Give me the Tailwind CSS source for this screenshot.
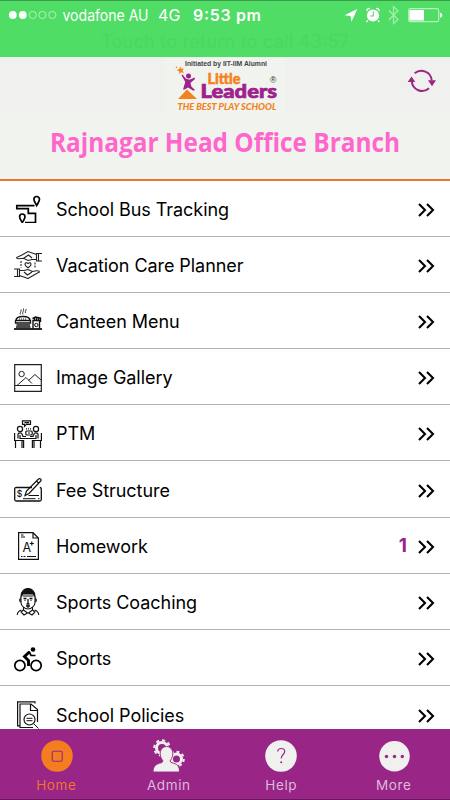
<!DOCTYPE html>
<html lang="en">
<head>
  <meta charset="UTF-8">
  <meta name="viewport" content="width=device-width, initial-scale=1.0">
  <title>Little Leaders</title>
  <script src="https://cdn.jsdelivr.net/npm/@tailwindcss/browser@4"></script>
</head>
<body class="bg-white font-['Inter',sans-serif] text-black">
  <!-- Shared row arrow -->
  <svg class="hidden">
    <symbol id="arrow" viewBox="0 0 17 14"><path d="M1 1l6 6-6 6M9 1l6 6-6 6" fill="none" stroke="#000" stroke-width="2.1"/></symbol>
  </svg>

  <div class="w-[450px] h-[800px] flex flex-col overflow-hidden">

    <!-- Status bar -->
    <div class="h-[57px] shrink-0 bg-[#4fdd66] border-t border-[#3c9a4b]">
      <svg class="block" width="450" height="56" viewBox="0 1 450 56" fill="#fff">
        <circle cx="12.8" cy="15" r="3.9"/>
        <circle cx="22.8" cy="15" r="3.9"/>
        <g fill="none" stroke="#c5f5cb" stroke-width=".8">
          <circle cx="32.7" cy="15" r="3.6"/>
          <circle cx="42.4" cy="15" r="3.6"/>
          <circle cx="52.3" cy="15" r="3.6"/>
        </g>
        <text x="62.5" y="21" font-size="16" textLength="86" lengthAdjust="spacingAndGlyphs">vodafone AU</text>
        <text x="158" y="21" font-size="16" textLength="22.5">4G</text>
        <text x="193" y="21" font-size="16" font-weight="600" textLength="68">9:53 pm</text>
        <text x="101" y="48" font-size="18" fill="#4ad762" textLength="248">Touch to return to call 43:57</text>
        <path d="M357.3 9 344.5 15.2 350.5 16 351.5 21.8Z"/>
        <circle cx="373" cy="15.5" r="6.1"/>
        <path d="M368 20.5l-1.5 1.5M378 20.5l1.5 1.5M367 11.2c-.5-2 1-3 3-2.6M379 11.2c.5-2-1-3-3-2.6" fill="none" stroke="#fff" stroke-width="1.3"/>
        <path d="M373.3 11.5V16h-3.2" fill="none" stroke="#4fdd66" stroke-width="1.1"/>
        <path d="M389 10.5l9 9-4.5 4V6.8l4.5 4-9 9" fill="none" stroke="#a2efab" stroke-width="1.3"/>
        <rect x="408.7" y="8.7" width="30" height="13" rx="1.8" fill="none" stroke="#b9f4bf" stroke-width="1.2"/>
        <rect x="409.5" y="10" width="14.5" height="10.5"/>
        <path d="M440 12.8c3 .5 3 4.400 0 4.900Z"/>
      </svg>
    </div>

    <!-- Header -->
    <header class="h-[123.5px] shrink-0 bg-[#f0f3ee] border-b-2 border-[#ed7231]">
      <svg class="block" width="450" height="121" viewBox="0 57 450 121">
        <rect x="0" y="57" width="450" height="56" fill="#f0f0ee"/>
        <rect x="164" y="58" width="121" height="55" fill="#f0f3ee"/>
        <text x="185" y="65.800" font-family="Liberation Sans" font-weight="700" font-size="7.500" fill="#444" textLength="82" lengthAdjust="spacingAndGlyphs">Initiated by IIT-IIM Alumni</text>
        <path d="M180 66.500l1.400 2.300 2.600-.4-1.500 2.100 1.500 2.400-2.700-.7-2 1.900-.1-2.900-2.600-1.200 2.700-1Z" fill="#f58220"/>
        <circle cx="176.500" cy="67.300" r=".8" fill="#f58220"/>
        <circle cx="188.500" cy="76" r="2.500" fill="#a0208c"/>
        <path d="M182.500 74.500l3.500 4.300 3.500 1 5.200-2.300.3 1.600-4.600 3.900 1 3.400 3.600 3.600-1.600.8-5.400-3.300-3.300 2-1.700 0 2.300-7.500-3.800-6.800Z" fill="#a0208c"/>
        <path d="M187 89.500l10 9.500h-19Z" fill="#f58220"/>
        <text x="207.500" y="84" font-family="Lato" font-weight="900" font-size="15.500" fill="#f58220" stroke="#f58220" stroke-width=".5" textLength="33" lengthAdjust="spacingAndGlyphs">Little</text>
        <text x="200.500" y="98" font-family="Lato" font-weight="900" font-size="19.500" fill="#a0208c" stroke="#a0208c" stroke-width=".7" textLength="76.500" lengthAdjust="spacingAndGlyphs">Leaders</text>
        <text x="270" y="83" font-size="8.500" fill="#333" font-family="Liberation Sans">®</text>
        <text x="177.500" y="110" font-family="Lato" font-style="italic" font-weight="900" font-size="9.800" fill="#f58220" textLength="99" lengthAdjust="spacingAndGlyphs">THE BEST PLAY SCHOOL</text>
        <g fill="none" stroke="#9b2587" stroke-width="2">
          <path d="M414.700 73.300a10.300 10.300 0 0 1 17 7"/>
          <path d="M429 88.300a10.300 10.300 0 0 1-17.200-7"/>
        </g>
        <path d="M411.500 76.500l3.800 5.500h-7.600ZM432 86.200l-4-6h8Z" fill="#9b2587"/>
        <text x="50" y="151.500" font-family="Open Sans" font-weight="700" font-size="27.500" fill="#ff66cc" textLength="350" lengthAdjust="spacingAndGlyphs">Rajnagar Head Office Branch</text>
      </svg>
    </header>

    <!-- Menu -->
    <main class="flex-1 min-h-0 overflow-hidden text-[18px] tracking-[-0.06px]">
      <div class="h-[56.2px] flex items-center px-3.5 pt-0.5 border-b border-[#b3b3b3]">
        <svg class="size-7 shrink-0" viewBox="0 0 28 28" fill="none" stroke="#000" stroke-width="1.7">
          <path d="M20.500 10.700H2.800v3h11.500v4.600h7.200v9.200H11"/>
          <path d="M22.700 10.500c-1.300-2.800-2.800-4.200-2.800-6.200a2.800 2.800 0 0 1 5.600 0c0 2-1.500 3.400-2.800 6.200ZM8.300 27.500c-1.300-2.300-2.700-3.800-2.700-5.800a2.700 2.700 0 0 1 5.400 0c0 2-1.400 3.500-2.700 5.800Z"/>
        </svg>
        <span class="ml-3.5 flex-1">School Bus Tracking</span>
        <svg class="w-[17px] h-3.5 mt-px mr-px"><use href="#arrow"/></svg>
      </div>

      <div class="h-[56.2px] flex items-center px-3.5 pt-0.5 border-b border-[#b3b3b3]">
        <svg class="size-7 shrink-0" viewBox="0 0 28 28" fill="none" stroke="#222" stroke-width="1.1">
          <path d="M28 2.500h-5.500v7.500H28M24.500 2.500V10M22.500 3.500L14 .6 8 4 2.500 6.500c0 1.500 3 1.500 7 .8L14 9.500l4-1h4.500M10 7l4.500-3 3.500 3"/>
          <path d="M0 25.500h5.500V18H0M3.500 25.500V18M5.500 24.500l8.500 3 6-3.500 5.500-3c0-1.500-3-1.500-7-.5L14 18.500l-4 1H5.500M18 21l-4.500 3-3.500-3"/>
          <path d="M14 16.800c-5-3.300-2.700-6.500 0-4.300 2.700-2.200 5 1 0 4.300Z"/>
          <path d="M7 10v6.500M21 11.500v6" stroke-dasharray="2 1"/>
        </svg>
        <span class="ml-3.5 flex-1">Vacation Care Planner</span>
        <svg class="w-[17px] h-3.5 mt-px mr-px"><use href="#arrow"/></svg>
      </div>

      <div class="h-[56.2px] flex items-center px-3.5 pt-0.5 border-b border-[#b3b3b3]">
        <svg class="size-7 shrink-0" viewBox="0 1.500 28 28" fill="none" stroke="#111" stroke-width="1">
          <path d="M0 23.500h28" stroke-width="1.800"/>
          <path d="M2 15c0-3 3-4 7-4s7 1 7 4ZM1.500 15h15v2.500h-15ZM2.500 19.500h13.500M2 21.500h14.500" stroke-width="1.300"/>
          <path d="M5 13.500h8" stroke-dasharray="1 1"/>
          <path d="M6.500 9c-1.500-2 1.500-2.500.5-5M9 9c-1.500-2.500 1.500-3 .5-6M11.500 7.500c-1-1.500 1-2 .5-4" stroke-width=".8"/>
          <path d="M19 23v-8h6.500v8M18.500 13l3-1.500 5 1v4M20.500 15v-3.500M22.500 15v-4M24.500 15v-3.500" stroke-width="1.400"/>
          <circle cx="22.300" cy="19.500" r="1.700"/>
        </svg>
        <span class="ml-3.5 flex-1">Canteen Menu</span>
        <svg class="w-[17px] h-3.5 mt-px mr-px"><use href="#arrow"/></svg>
      </div>

      <div class="h-[56.2px] flex items-center px-3.5 pt-0.5 border-b border-[#b3b3b3]">
        <svg class="size-7 shrink-0" viewBox="0 0 28 28" fill="none" stroke="#222" stroke-width="1">
          <path d="M.7.700h26.600v26.600H.7ZM.7 21.500h26.600" stroke-width="1.200"/>
          <circle cx="7.600" cy="10" r="2.700"/>
          <path d="M3 21.500l9-8 6 6M14.500 16.500l6.500-6 6.500 6"/>
        </svg>
        <span class="ml-3.5 flex-1">Image Gallery</span>
        <svg class="w-[17px] h-3.5 mt-px mr-px"><use href="#arrow"/></svg>
      </div>

      <div class="h-[56.2px] flex items-center px-3.5 pt-0.5 border-b border-[#b3b3b3]">
        <svg class="size-7 shrink-0" viewBox="0 0 28 28" fill="none" stroke="#111" stroke-width="1.200">
          <path d="M8.500.8h8v3.500h-4l-2 2v-2h-2ZM10.500 2.600h4.500"/>
          <circle cx="6" cy="9" r="2.600"/><circle cx="22" cy="9" r="2.600"/>
          <path d="M12 8.800h1M14 8.800h1M16 8.800h1"/>
          <rect x="11.800" y="11" width="6.400" height="4" rx="1"/>
          <path d="M14 13h2M.6 13v7.500h9V28M1.500 20.500V28M8 20v8M27.400 13v7.500h-9V28M26.500 20.500V28M20 20v8"/>
          <path d="M4 18.500V14c1-1.500 3.500-1.500 4 0l1 2.500h3M24 18.500V14c-1-1.500-3.500-1.500-4 0l-1 2.500h-3M9 18.500h10M6 15v3.500h3M22 15v3.500h-3"/>
        </svg>
        <span class="ml-3.5 flex-1">PTM</span>
        <svg class="w-[17px] h-3.5 mt-px mr-px"><use href="#arrow"/></svg>
      </div>

      <div class="h-[56.2px] flex items-center px-3.5 pt-0.5 border-b border-[#b3b3b3]">
        <svg class="size-7 shrink-0" viewBox="0 0 28 28" fill="none" stroke="#111" stroke-width="1.300">
          <path d="M18 11.500H2.200c-1 0-1.500.5-1.500 1.500v10.500c0 1 .5 1.500 1.500 1.500h23.600c1 0 1.500-.5 1.500-1.500V13c0-1-.5-1.500-1.500-1.500"/>
          <path d="M11 19.500l1.500-4.500L24.500 3c1.500-1.200 3.300.5 2.200 2L15 17.500ZM22.500 5l2.200 2.200" stroke-width="1.200"/>
          <path d="M14.500 19.500H25M9 22.700h12.500M24 22.700h1.500" stroke-width="1"/>
          <text x="2.800" y="20.700" font-size="8.500" font-weight="500" fill="#111" stroke="none">$</text>
        </svg>
        <span class="ml-3.5 flex-1">Fee Structure</span>
        <svg class="w-[17px] h-3.5 mt-px mr-px"><use href="#arrow"/></svg>
      </div>

      <div class="h-[56.2px] flex items-center px-3.5 pt-0.5 border-b border-[#b3b3b3]">
        <svg class="size-7 shrink-0" viewBox="0 0 28 28" fill="none" stroke="#111" stroke-width="1.200">
          <path d="M4.600.700h14.400l5.400 5.300v21.300H4.600ZM19 .700V6h5.400"/>
          <path d="M7 3h2.500M7 5h4M7 24.500h1.500M9.500 24.500h2M13 24.500h9"/>
          <text x="8.500" y="19.500" font-size="12.500" fill="#111" stroke="none">A</text>
          <path d="M17.800 9.500v4M15.800 11.500h4" stroke-width="1.100"/>
        </svg>
        <span class="ml-3.5 flex-1">Homework</span>
        <span class="mr-[11px] font-bold text-[19px] text-[#9b1f8f]">1</span>
        <svg class="w-[17px] h-3.5 mt-px mr-px"><use href="#arrow"/></svg>
      </div>

      <div class="h-[56.2px] flex items-center px-3.5 pt-0.5 border-b border-[#b3b3b3]">
        <svg class="size-7 shrink-0" viewBox="0 0 28 28" fill="none" stroke="#111" stroke-width="1.100">
          <path d="M7 8.500c0-5 3-8 7-8s7 3 7 8l-2-2.500H9Z" fill="#111"/>
          <path d="M7 8.500v6c0 3.500 4 6.500 7 6.500s7-3 7-6.500v-6M7 10.500c-2 0-1.500 3.500 0 3.500M21 10.500c2 0 1.500 3.500 0 3.500M8.500 8h11"/>
          <path d="M9.500 10.500h3M15.500 10.500h3M10.500 12.300h1M16.500 12.300h1M14 11v4.500M12.500 16h3M12 18h4M14 17v3" stroke-width="1.300"/>
          <path d="M9.500 19v3l4 3-3.500 2-3-3 2.500-2M18.500 19v3l-4 3 3.500 2 3-3-2.500-2M7.500 22c-3 .8-4 2-4.300 5M20.500 22c3 .8 4 2 4.300 5"/>
        </svg>
        <span class="ml-3.5 flex-1">Sports Coaching</span>
        <svg class="w-[17px] h-3.5 mt-px mr-px"><use href="#arrow"/></svg>
      </div>

      <div class="h-[56.2px] flex items-center px-3.5 pt-0.5 border-b border-[#b3b3b3]">
        <svg class="size-7 shrink-0" viewBox="0 0 28 28" fill="none" stroke="#000" stroke-width="1.700">
          <circle cx="5.900" cy="20.500" r="5.100"/><circle cx="22.100" cy="20.500" r="5.100"/>
          <circle cx="19" cy="4.500" r="2.300" fill="#000" stroke="none"/>
          <path d="M15.500 6.800l-5 4.700 4 4V21" stroke-width="2.900"/>
          <path d="M15 6.500l2 4h4.500"/>
        </svg>
        <span class="ml-3.5 flex-1">Sports</span>
        <svg class="w-[17px] h-3.5 mt-px mr-px"><use href="#arrow"/></svg>
      </div>

      <div class="h-[56.2px] flex items-center px-3.5 pt-0.5">
        <svg class="size-7 shrink-0" viewBox="0 0 28 28" fill="none" stroke="#111" stroke-width="1.200">
          <path d="M21 2.500V.8H3.600v24H6"/>
          <path d="M23.500 21V8.500L17 3H6v23.500h13M16.500 3v6.500h7"/>
          <circle cx="15.500" cy="18.500" r="5.500"/>
          <path d="M12.500 17.300h6M12.500 19.700h6M19.500 22.500l5 5" stroke-width="1"/>
        </svg>
        <span class="ml-3.5 flex-1">School Policies</span>
        <svg class="w-[17px] h-3.5 mt-px mr-px"><use href="#arrow"/></svg>
      </div>
    </main>

    <!-- Bottom navigation -->
    <nav class="h-[71px] shrink-0 grid grid-cols-4 bg-[#992587] border-b border-[#661a5c] text-[13.5px] leading-[18px] tracking-[0.6px] text-[#dfb9da]">
      <a class="flex flex-col items-center pt-[11px] text-[#ed742e]">
        <svg class="size-8 ml-px" viewBox="0 0 32 32" fill="none"><circle cx="16" cy="16" r="15.800" fill="#f47d20"/><rect x="11.200" y="11.200" width="10" height="10" rx="1.500" stroke="#992587" stroke-width="1.100"/></svg>
        <span class="mt-1">Home</span>
      </a>
      <a class="flex flex-col items-center pt-[10px]">
        <svg class="w-8 h-[33px]" viewBox="0 0 32 33" fill="none">
          <g stroke="#f0f0ee">
            <circle cx="9" cy="9" r="5.500" stroke-width="3"/>
            <circle cx="9" cy="9" r="7.800" stroke-width="2" stroke-dasharray="3.100 3"/>
            <circle cx="23.500" cy="20" r="5" stroke-width="3"/>
            <circle cx="23.500" cy="20" r="7.300" stroke-width="2" stroke-dasharray="2.900 2.800"/>
          </g>
          <path d="M0 33c0-6 3-8 9-9.500l1-1.500C5 16 7 7.500 13.500 7.500S22 16 17 22l1 1.500c6.500 1.500 8.500 3.500 8.500 9.500Z" fill="#f0f0ee" stroke="#992587" stroke-width=".9"/>
        </svg>
        <span class="mt-1">Admin</span>
      </a>
      <a class="flex flex-col items-center pt-[11px]">
        <svg class="size-8" viewBox="0 0 32 32" fill="none"><circle cx="16" cy="16" r="15.800" fill="#f0f0ee"/><path d="M12.700 11.500c.2-4 7-4 7 0 0 3-3.500 3.200-3.500 7" stroke="#992587" stroke-width="1.200"/><circle cx="16.200" cy="22.300" r="1" fill="#992587"/></svg>
        <span class="mt-1">Help</span>
      </a>
      <a class="flex flex-col items-center pt-[11px]">
        <svg class="size-8" viewBox="0 0 32 32"><circle cx="16.500" cy="16.300" r="15.300" fill="#f0f0ee"/><g fill="#992587"><circle cx="8.500" cy="16.500" r="1.700"/><circle cx="16.500" cy="16.500" r="1.700"/><circle cx="24.300" cy="16.500" r="1.700"/></g></svg>
        <span class="mt-1">More</span>
      </a>
    </nav>
  </div>
</body>
</html>
